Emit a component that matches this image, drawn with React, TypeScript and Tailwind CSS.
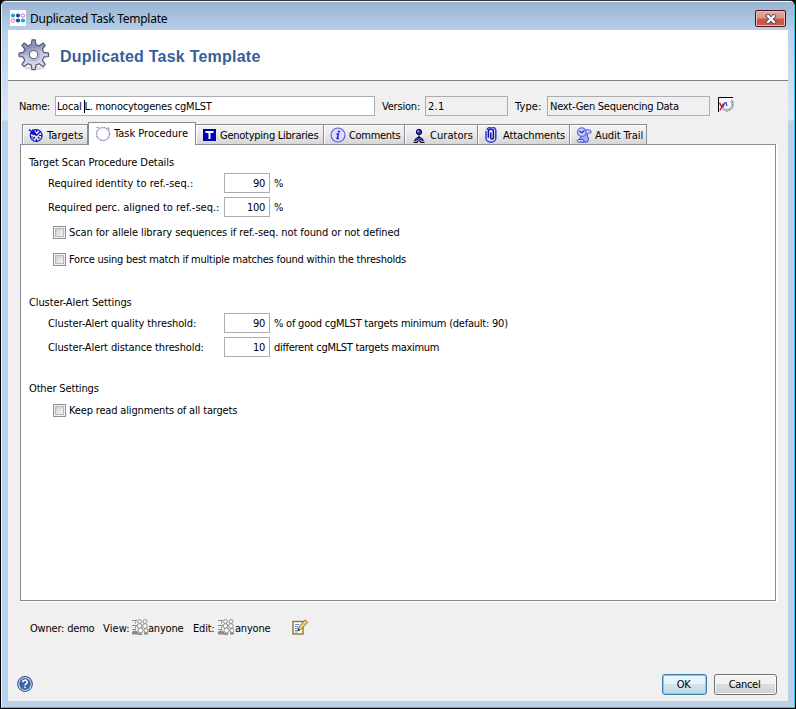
import React from 'react';

const Logo = () => (
  <svg width="16" height="16" viewBox="0 0 16 16" className="mt-1 bg-white">
    <circle cx="3" cy="5.5" r="2.1" fill="#18a8e0" />
    <circle cx="8" cy="5.5" r="2.1" fill="#1c4f96" />
    <circle cx="13" cy="5.5" r="1.7" fill="none" stroke="#ee5fa8" />
    <circle cx="3" cy="10.5" r="1.7" fill="none" stroke="#ee5fa8" />
    <circle cx="8" cy="10.5" r="2.1" fill="#1c4f96" />
    <circle cx="13" cy="10.5" r="2.1" fill="#18a8e0" />
  </svg>
);

const GearIcon = () => (
  <svg width="32" height="32" viewBox="0 0 32 32">
    <defs>
      <linearGradient id="gear" x1="0" y1="0" x2="0.3" y2="1">
        <stop offset="0" stopColor="#a9b3cd" />
        <stop offset="0.35" stopColor="#8391b4" />
        <stop offset="0.6" stopColor="#c6c9df" />
        <stop offset="1" stopColor="#dcdcea" />
      </linearGradient>
    </defs>
    <ellipse cx="17" cy="29" rx="11" ry="2" fill="#dedede" />
    <path
      d="M14 .8h3.200l.7 4.700 3.200 1.400 3.900-2.900 2.300 2.300-2.900 3.900 1.400 3.200 4.700.7v3.400l-4.700.7-1.400 3.200 2.900 3.900-2.300 2.300-3.900-2.900-3.200 1.400-.7 4.500H14l-.7-4.500-3.200-1.400-3.900 2.900-2.300-2.300 2.900-3.900-1.400-3.200-4.300-.7v-3.400l4.300-.7 1.400-3.200L3.900 6.300 6.200 4l3.900 2.900 3.200-1.400z"
      fill="url(#gear)"
      stroke="#55597a"
      strokeWidth="1.2"
      strokeLinejoin="round"
    />
    <circle cx="15.600" cy="15.700" r="6.300" fill="none" stroke="#a9aeca" />
    <circle cx="15.600" cy="15.700" r="4.200" fill="#fff" stroke="#62678a" strokeWidth="1.200" />
  </svg>
);

const TargetIcon = () => (
  <svg width="16" height="16" viewBox="0 0 16 16" fill="none" stroke="#0a12c8">
    <circle cx="8.200" cy="8.500" r="5.900" strokeWidth="1.200" />
    <path d="M1 2.500l7.500 6M4.500 2.500l4 6M2.500 6l4 1.500" strokeWidth="1.600" />
    <path d="M8.500 3v2M8.500 12v2.500M2.500 10h2.500M11 8.500h3M12.500 4.500L8.500 8.500M5 12l2-2M11.500 11.500l-1.500-1.500M10 6l1 1" strokeWidth="1.200" />
  </svg>
);

const RingIcon = () => (
  <svg width="16" height="16" viewBox="0 0 16 16" fill="none">
    <circle cx="8" cy="8" r="6.300" stroke="#d4d5ee" strokeWidth="1.600" />
    <circle cx="8" cy="8" r="6.700" stroke="#6668a6" strokeWidth=".9" strokeDasharray="1.600 1.300" />
    <path d="M1.500 1.500h2M12.500 2h1.500v1.500" stroke="#6668a6" strokeWidth=".8" />
  </svg>
);

const LibraryIcon = () => (
  <svg width="13" height="12" viewBox="0 0 13 12">
    <rect width="13" height="12" fill="#0000b4" />
    <path d="M2.500 3h8M6.500 3v7" stroke="#fff" strokeWidth="2" />
  </svg>
);

const InfoIcon = () => (
  <svg width="16" height="16" viewBox="0 0 16 16">
    <circle cx="8" cy="8" r="7" fill="#dcddff" stroke="#5a5ae0" strokeWidth="1.100" />
    <circle cx="9" cy="4.500" r="1.100" fill="#1414d2" />
    <path d="M6.500 7h1.900l-1.200 4.500h1.700" fill="none" stroke="#1414d2" strokeWidth="1.400" />
  </svg>
);

const CuratorIcon = () => (
  <svg width="12" height="15" viewBox="0 0 12 15" className="mt-px">
    <circle cx="6" cy="4" r="2.700" fill="#2424d8" stroke="#08083c" />
    <circle cx="5.200" cy="3.200" r="1" fill="#a0a0ff" />
    <path d="M6 7.500v2" stroke="#08083c" strokeWidth="1.500" />
    <path d="M1.500 12.500Q3 9.300 6 9.300t4.500 3.200L8.500 12 6 10.800 3.500 12z" fill="#5a5ae8" stroke="#08083c" />
    <path d="M.5 14.300h3.500l1.500-2M11.500 14.300H8l-1.500-2" fill="none" stroke="#08083c" strokeWidth="1.300" />
  </svg>
);

const ClipIcon = () => (
  <svg width="12" height="16" viewBox="0 0 12 16" fill="none">
    <path d="M3.400 10.800V4.500a2.400 2.400 0 0 1 5 0v6.300a1.300 1.300 0 0 1-2.600 0V5.500" stroke="#0a10b0" strokeWidth="1.500" />
    <path d="M1 4v7.200a4.900 4 0 0 0 9.800 0V4.500A4.500 3.700 0 0 0 1.900 3" stroke="#3038e4" strokeWidth="1.500" />
  </svg>
);

const AuditIcon = () => (
  <svg width="16" height="16" viewBox="0 0 16 16">
    <path d="M5 9l6-3 1.500 6.500-1 2.500H5L3 13.500z" fill="#a4a9f4" stroke="#4048d0" />
    <path d="M10 3h3.500a1.700 1.700 0 0 1 1 3H12M2 12.500h5l1.500 2.500H3.500a1.300 1.300 0 0 1-1.500-2.500z" fill="#d4d6fc" stroke="#4048d0" />
    <circle cx="5.800" cy="5.200" r="4.300" fill="#c8ccfa" stroke="#6870e4" strokeWidth="1.400" />
    <path d="M3.500 4l2.200 1.800L8.500 3.500" fill="none" stroke="#1c24b4" strokeWidth="1.200" />
  </svg>
);

const TypeIcon = () => (
  <svg width="16" height="16" viewBox="0 0 16 16" fill="none" className="-mt-0.5">
    <rect x="1" y="1" width="13" height="14" fill="#f8f8fb" />
    <path d="M13 3.500a5.200 5.200 0 1 1-8 8" stroke="#b4b9c0" strokeWidth="2.600" />
    <path d="M14.500 4v6M12.500 12.500l-4 2" stroke="#868c94" strokeDasharray="2 1" />
    <path d="M.5 15V.5H15" stroke="#000" />
    <path d="M1.500 6l2.500 4M5.500 6.500L2 13.500" stroke="#d41430" strokeWidth="1.500" />
    <path d="M4.500 11l2.500-5.500 1 0 1 3.500" stroke="#2838c8" strokeWidth="1.100" />
  </svg>
);

const GroupIcon = () => (
  <svg width="16" height="16" viewBox="0 0 16 16" fill="#fdfdfd" stroke="#8a8a8a" className="-mt-0.5">
    <path d="M0 1.500h5M0 6.500h5M0 10.500h4M3.500 2.500v2M3.500 7.500v2" />
    <path d="M0 15q0-3 3-3t3 3z" fill="#8a8a8a" />
    <circle cx="7.500" cy="2.500" r="1.900" />
    <circle cx="13" cy="2.500" r="1.900" />
    <circle cx="7.500" cy="7" r="2.300" />
    <circle cx="13" cy="7" r="2.300" />
    <circle cx="8.500" cy="11.500" r="2.500" />
    <circle cx="14" cy="11.500" r="2" />
    <path d="M6 15.200h4M12 14.500h4" strokeWidth="1.800" />
  </svg>
);

const EditIcon = () => (
  <svg width="16" height="16" viewBox="0 0 16 16" className="-mt-0.5">
    <rect x="1" y="2.500" width="10" height="12.500" fill="#fff" stroke="#8d7430" strokeWidth="1.400" />
    <path d="M3 5.500h4.500M3 7.500h3.500M3 9.500h3M3 11.500h5M3 13h3" stroke="#6f8fca" />
    <path d="M6.200 11l.9-3.200L13 .8l2.800 2.400L9.400 10z" fill="#eccb78" stroke="#8d6c24" strokeWidth=".9" />
    <path d="M5.500 12l.7-2.500 1.800 1.600z" fill="#222" />
  </svg>
);

const HelpIcon = () => (
  <svg width="16" height="16" viewBox="0 0 16 16" className="-mt-px">
    <circle cx="8" cy="8" r="7.300" fill="#fff" stroke="#355a94" strokeWidth="1.200" />
    <circle cx="8" cy="8" r="5.900" fill="#3a66a8" />
    <path d="M5.800 6.300a2.200 2 0 1 1 3.200 1.600c-.8.400-1 .7-1 1.600" fill="none" stroke="#fff" strokeWidth="1.500" />
    <rect x="7.200" y="10.600" width="1.600" height="1.500" fill="#fff" />
  </svg>
);

const CloseButton = () => (
  <button className="mt-[5px] flex h-[17px] w-[31px] items-center justify-center rounded-[2px] border border-[#4a1523] bg-linear-to-b from-[#e8aca0] from-0% via-[#dc9486] via-45% to-[#c9583e] to-55% shadow-[inset_0_0_0_1px_#eebbae]">
    <svg width="12" height="10" viewBox="0 0 12 10">
      <path d="M3 2l6 6M9 2L3 8" stroke="#4b5266" strokeWidth="4" strokeLinecap="square" />
      <path d="M3 2l6 6M9 2L3 8" stroke="#fff" strokeWidth="2.200" strokeLinecap="square" />
    </svg>
  </button>
);

interface TabProps {
  icon: React.ReactNode;
  label: string;
  className: string;
}

const Tab: React.FC<TabProps> = ({ icon, label, className }) => (
  <div className={`flex h-5 items-center border-t border-r border-[#898c95] bg-linear-to-b from-[#f4f4f4] via-[#ebebeb] via-45% to-[#d6d6d6] shadow-[inset_1px_1px_0_#fff] ${className}`}>
    {icon}
    <span className="pt-0.5">{label}</span>
  </div>
);

interface NumberRowProps {
  label: string;
  value: string;
  suffix: string;
  className?: string;
  labelClass: string;
  suffixClass?: string;
}

const NumberRow: React.FC<NumberRowProps> = ({ label, value, suffix, className = '', labelClass, suffixClass = '' }) => (
  <div className={`flex h-5 items-center pl-[27px] ${className}`}>
    <span className={`w-[176px] pt-px ${labelClass}`}>{label}</span>
    <span className="flex h-5 w-[46px] items-center justify-end border border-[#abadb3] bg-white pt-px pr-1">{value}</span>
    <span className={`pt-px pl-1 ${suffixClass}`}>{suffix}</span>
  </div>
);

const CheckRow: React.FC<{ label: string; className: string }> = ({ label, className }) => (
  <div className={`flex h-[13px] items-center gap-[3px] pl-8 ${className}`}>
    <span className="h-[13px] w-[13px] border border-[#8e8f8f] bg-[#f4f4f4] p-px">
      <span className="block h-[9px] w-[9px] border border-[#b4b8bf] bg-linear-to-br from-[#cbcfd5] to-[#f6f6f6]" />
    </span>
    <span>{label}</span>
  </div>
);

const App = () => {
  return (
    <div className="h-[709px] w-[796px] overflow-hidden bg-black font-['DejaVu_Sans_Condensed','DejaVu_Sans',sans-serif] text-[11px] leading-[14px] tracking-[-0.3px] whitespace-pre text-black">
      <div className="flex h-[709px] flex-col rounded-t-[6px] border border-t-[#33363c] border-r-black border-b-black border-l-black">
        <div className="flex h-[707px] flex-col rounded-t-[5px] border border-t-[#f4f8fc] border-r-[#34c8e6] border-b-[#34c8e6] border-l-[#e6f1fb] bg-[#b9d1ea]">
          <div className="flex h-7 shrink-0 items-center rounded-t-[4px] bg-linear-to-b from-[#98b4d2] to-[#b7cfe9] pr-2 pl-2">
            <Logo />
            <span className="flex-1 pt-[5px] pl-1 font-['Noto_Sans',sans-serif] text-[12px] leading-4 tracking-[-0.27px]">Duplicated Task Template</span>
            <CloseButton />
          </div>

          <div className="flex h-[671px] bg-[linear-gradient(to_bottom,#b9d1ea_0px,#d9e7f6_90px,#b9d1ea_91px)] px-1.5">
            <div className="flex flex-1 flex-col bg-[#f0f0f0]">
              <div className="flex h-[51px] shrink-0 items-center gap-[10px] border-b border-[#808080] bg-white pl-[10px]">
                <GearIcon />
                <h1 className="pt-[3px] font-['Liberation_Sans',sans-serif] text-[16px] leading-5 font-bold tracking-[0.23px] text-[#365f9c]">Duplicated Task Template</h1>
              </div>

              <div className="mt-[15px] flex h-5 shrink-0 items-center pl-[11px]">
                <span className="w-9 pt-px">Name:</span>
                <span className="flex h-5 w-[320px] items-center border border-[#abadb3] bg-white pt-px pl-px tracking-[-0.22px]">
                  <span>Local </span>
                  <span className="relative">
                    L. monocytogenes cgMLST
                    <span className="absolute top-0 left-0 h-[13px] w-px bg-black" />
                  </span>
                </span>
                <span className="w-[50px] pt-px pl-[7px] tracking-[-0.2px]">Version:</span>
                <span className="flex h-5 w-[83px] items-center border border-[#abadb3] pt-px pl-0.5 tracking-[0.3px]">2.1</span>
                <span className="w-[39px] pt-px pl-[7px] tracking-[0.1px]">Type:</span>
                <span className="mr-2 flex h-5 w-[163px] items-center border border-[#abadb3] pt-px pl-0.5 tracking-[-0.26px]">Next-Gen Sequencing Data</span>
                <TypeIcon />
              </div>

              <div className="mt-1.5 flex h-[22px] shrink-0 items-end pl-[14px]">
                <Tab icon={<TargetIcon />} label="Targets" className="w-[66px] gap-[3px] border-l pl-[5px] tracking-[0.1px]" />
                <div className="z-10 -mb-px flex h-[23px] w-[108px] items-center gap-[3px] border border-b-0 border-[#898c95] bg-white pl-1.5 tracking-[0px]">
                  <RingIcon />
                  <span>Task Procedure</span>
                </div>
                <Tab icon={<LibraryIcon />} label="Genotyping Libraries" className="w-[128px] gap-1 pl-[7px] tracking-[-0.25px]" />
                <Tab icon={<InfoIcon />} label="Comments" className="w-[81px] gap-[3px] pl-[6px]" />
                <Tab icon={<CuratorIcon />} label="Curators" className="w-[73px] gap-[5px] pl-[8px] tracking-[0.05px]" />
                <Tab icon={<ClipIcon />} label="Attachments" className="w-[92px] gap-[6px] pl-[7px] tracking-[-0.1px]" />
                <Tab icon={<AuditIcon />} label="Audit Trail" className="w-[77px] gap-[3px] pl-[6px] tracking-[-0.1px]" />
              </div>

              <div className="ml-3 h-[457px] w-[756px] shrink-0 border border-[#898c95] bg-white pt-[7px] pl-[7px] shadow-[2px_1px_0_#fff]">
                <div className="flex h-5 items-center pt-px pl-px tracking-[-0.1px]">Target Scan Procedure Details</div>
                <div className="-ml-[7px]">
                  <NumberRow label="Required identity to ref.-seq.:" value="90" suffix="%" className="mt-px" labelClass="tracking-[0.03px]" />
                  <NumberRow label="Required perc. aligned to ref.-seq.:" value="100" suffix="%" className="mt-1" labelClass="tracking-[0.01px]" />
                  <CheckRow label="Scan for allele library sequences if ref.-seq. not found or not defined" className="mt-[9px] tracking-[-0.1px]" />
                  <CheckRow label="Force using best match if multiple matches found within the thresholds" className="mt-[14px] tracking-[-0.23px]" />
                </div>
                <div className="mt-[26px] flex h-5 items-center pt-px pl-px tracking-[-0.11px]">Cluster-Alert Settings</div>
                <div className="-ml-[7px]">
                  <NumberRow label="Cluster-Alert quality threshold:" value="90" suffix="% of good cgMLST targets minimum (default: 90)" className="mt-px" labelClass="tracking-[-0.1px]" suffixClass="tracking-[-0.23px]" />
                  <NumberRow label="Cluster-Alert distance threshold:" value="10" suffix="different cgMLST targets maximum" className="mt-1" labelClass="tracking-[-0.11px]" />
                </div>
                <div className="mt-[21px] flex h-5 items-center pt-px pl-px tracking-[-0.15px]">Other Settings</div>
                <div className="-ml-[7px]">
                  <CheckRow label="Keep read alignments of all targets" className="mt-1.5 tracking-[-0.16px]" />
                </div>
              </div>

              <div className="mt-[17px] flex h-5 shrink-0 items-center pl-[22px] tracking-[-0.2px]">
                <span className="w-[73px] pt-px">Owner: demo</span>
                <span className="w-[29px] pt-px tracking-[0.1px]">View:</span>
                <GroupIcon />
                <span className="w-[45px] pt-px">anyone</span>
                <span className="w-[25px] pt-px">Edit:</span>
                <GroupIcon />
                <span className="w-[58px] pt-px pl-px">anyone</span>
                <EditIcon />
              </div>

              <div className="mt-9 flex h-[21px] shrink-0 items-center pr-[11px] pl-[9px]">
                <HelpIcon />
                <div className="ml-auto flex gap-[7px]">
                  <button className="h-[21px] w-[45px] rounded-[3px] border border-[#3c7fb1] bg-linear-to-b from-[#eaf4fa] from-45% via-[#d3e6f0] via-50% to-[#bcd6e4] pr-0.5 shadow-[inset_0_0_0_1px_#6fd2f5]">OK</button>
                  <button className="h-[21px] w-[63px] rounded-[3px] border border-[#707070] bg-linear-to-b from-[#f2f2f2] from-45% via-[#dddddd] via-50% to-[#cfcfcf] pr-0.5 shadow-[inset_0_0_0_1px_#fbfbfb]">Cancel</button>
                </div>
              </div>
            </div>
          </div>
        </div>
      </div>
    </div>
  );
};

export default App;
